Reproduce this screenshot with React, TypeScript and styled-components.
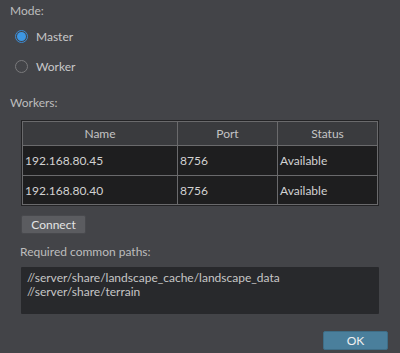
import * as React from 'react';
import styled, { createGlobalStyle } from 'styled-components';

const GlobalStyle = createGlobalStyle`
  html, body {
    margin: 0;
    padding: 0;
    background: #434448;
  }
`;

const Page = styled.div`
  width: 400px;
  height: 353px;
  box-sizing: border-box;
  background: #434448;
  font-family: 'Segoe UI', Lato, sans-serif;
  font-size: 12px;
  color: #c4c4c4;
  display: flex;
  flex-direction: column;
  overflow: hidden;
`;

const Label = styled.div<{ $top: number; $left?: number }>`
  margin-top: ${({ $top }) => $top}px;
  margin-left: ${({ $left }) => $left ?? 10}px;
  line-height: 14px;
  height: 14px;
  color: #bdbdbd;
`;

const RadioGroup = styled.div`
  display: flex;
  flex-direction: column;
  margin-top: 3px;
  margin-left: 15px;
`;

const RadioRow = styled.label`
  display: flex;
  align-items: center;
  gap: 8px;
  height: 30px;
  color: #c8c8c8;
`;

const RadioCircle = styled.span<{ $checked?: boolean }>`
  width: 13px;
  height: 13px;
  box-sizing: border-box;
  border-radius: 50%;
  border: 1px solid ${({ $checked }) => ($checked ? '#3c8ad2' : '#7a7a7c')};
  display: flex;
  align-items: center;
  justify-content: center;
  &::after {
    content: '';
    width: 9px;
    height: 9px;
    border-radius: 50%;
    background: ${({ $checked }) => ($checked ? '#3d97e4' : 'transparent')};
  }
`;

const TableFrame = styled.div`
  margin-top: 10px;
  margin-left: 21px;
  width: 358px;
  box-sizing: border-box;
  border: 1px solid #232325;
`;

const Grid = styled.div`
  display: grid;
  grid-template-columns: 154px 99px 99px;
  grid-template-rows: 23px 29px 28px;
  gap: 1px;
  padding: 1px;
  background: #6a6a6c;
`;

const HeadCell = styled.div`
  background: #3a3b3e;
  color: #c4c4c4;
  display: flex;
  align-items: center;
  justify-content: center;
`;

const Cell = styled.div`
  background: #1e1e1f;
  color: #d2d2d2;
  display: flex;
  align-items: center;
  padding-left: 2px;
`;

const Button = styled.button<{ $primary?: boolean }>`
  height: 19px;
  width: 65px;
  box-sizing: border-box;
  padding: 0;
  font: inherit;
  font-size: 12px;
  line-height: 17px;
  border-radius: 2px;
  border: 1px solid ${({ $primary }) => ($primary ? '#3e6d86' : '#48494d')};
  background: ${({ $primary }) => ($primary ? '#4a7f9c' : '#5b5c60')};
  color: ${({ $primary }) => ($primary ? '#f0f0f0' : '#e4e4e4')};
`;

const ConnectButton = styled(Button)`
  margin-top: 9px;
  margin-left: 21px;
`;

const PathBox = styled.div`
  margin-top: 8px;
  margin-left: 21px;
  width: 358px;
  height: 47px;
  box-sizing: border-box;
  background: #28292c;
  border-radius: 1px;
  padding: 4px 0 0 6px;
  color: #c6c6c6;
`;

const PathLine = styled.div`
  line-height: 14px;
  height: 14px;
`;

const Footer = styled.div`
  display: flex;
  justify-content: flex-end;
  margin-top: 17px;
  padding-right: 12px;
`;

const workers = [
  { name: '192.168.80.45', port: '8756', status: 'Available' },
  { name: '192.168.80.40', port: '8756', status: 'Available' },
];

const paths = ['//server/share/landscape_cache/landscape_data', '//server/share/terrain'];

export default function App() {
  const [mode, setMode] = React.useState<'master' | 'worker'>('master');

  return (
    <Page>
      <GlobalStyle />
      <Label $top={4}>Mode:</Label>
      <RadioGroup>
        <RadioRow onClick={() => setMode('master')}>
          <RadioCircle $checked={mode === 'master'} />
          Master
        </RadioRow>
        <RadioRow onClick={() => setMode('worker')}>
          <RadioCircle $checked={mode === 'worker'} />
          Worker
        </RadioRow>
      </RadioGroup>
      <Label $top={15}>Workers:</Label>
      <TableFrame>
        <Grid>
          <HeadCell>Name</HeadCell>
          <HeadCell>Port</HeadCell>
          <HeadCell>Status</HeadCell>
          {workers.map((w) => (
            <React.Fragment key={w.name}>
              <Cell>{w.name}</Cell>
              <Cell>{w.port}</Cell>
              <Cell>{w.status}</Cell>
            </React.Fragment>
          ))}
        </Grid>
      </TableFrame>
      <ConnectButton>Connect</ConnectButton>
      <Label $top={11} $left={20}>Required common paths:</Label>
      <PathBox>
        {paths.map((p) => (
          <PathLine key={p}>{p}</PathLine>
        ))}
      </PathBox>
      <Footer>
        <Button $primary>OK</Button>
      </Footer>
    </Page>
  );
}
